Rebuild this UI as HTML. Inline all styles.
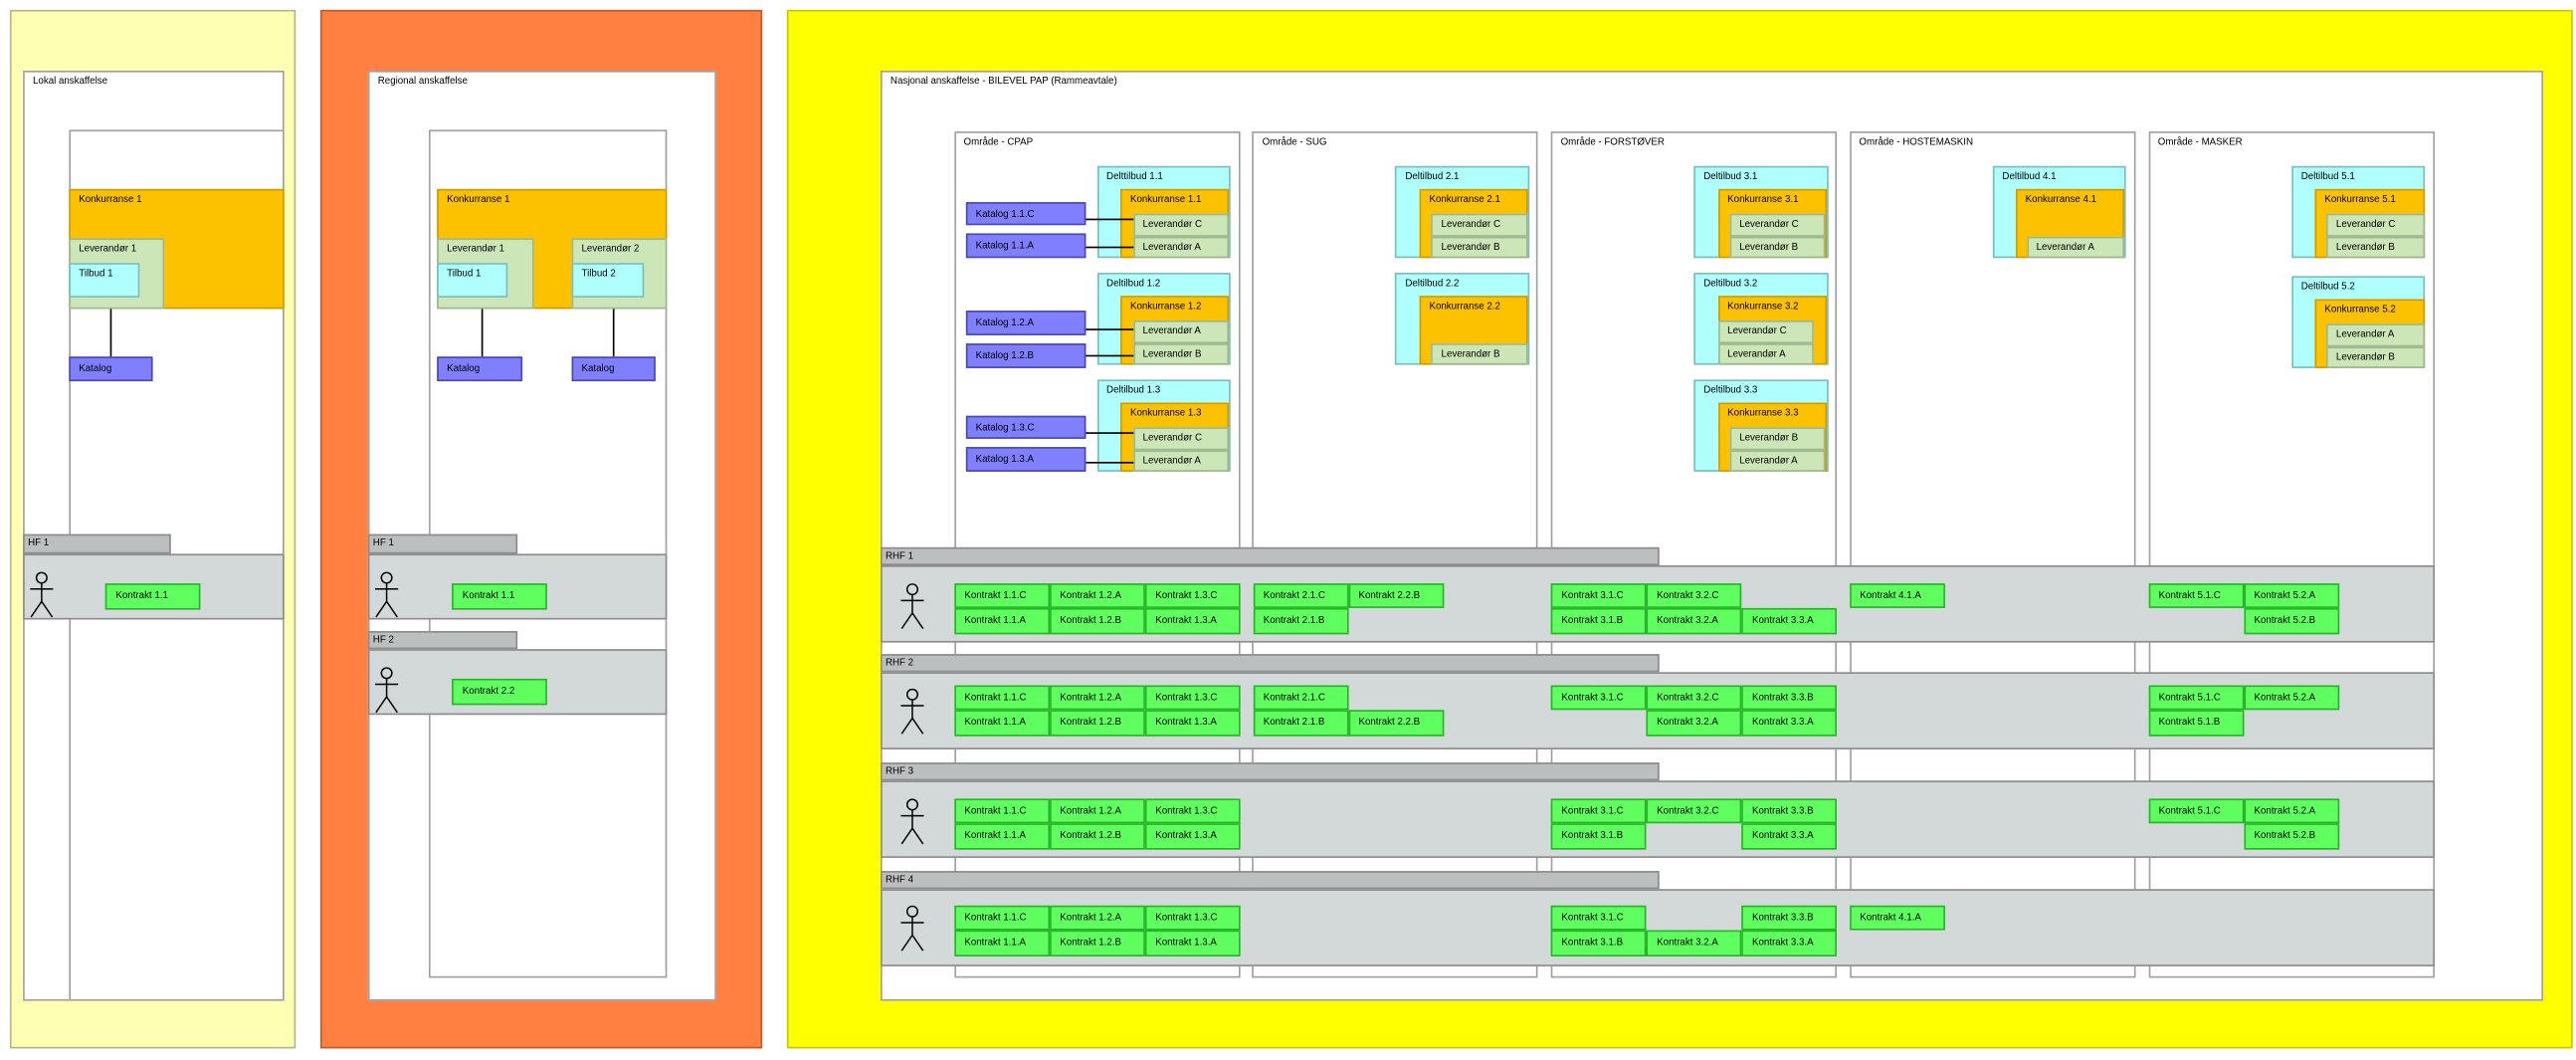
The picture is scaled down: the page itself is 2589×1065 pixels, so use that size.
<!DOCTYPE html>
<html><head><meta charset="utf-8"><style>
html,body{margin:0;padding:0;background:#fff;width:2589px;height:1065px;overflow:hidden}
#s{position:absolute;left:0;top:0;width:1568px;height:645px;transform:scale(1.65115);transform-origin:0 0;font-family:"Liberation Sans",sans-serif;color:#000}
#s div{position:absolute;box-sizing:border-box;white-space:nowrap;font-size:5.9px}
.w{background:#fff;border:0.6px solid #a0a0a0}
.t{padding:3px 0 0 5px}
.o{background:#fcc200;border:0.6px solid #d29c00;padding:3px 0 0 5px}
.g{background:#cce6b8;border:0.6px solid #9cb890;padding:3px 0 0 5px}
.c{background:#b0ffff;border:0.6px solid #7cbcbc;padding:3px 0 0 5px}
.kt{background:#8080ff;border:0.6px solid #4848b8;padding:0 0 0 5px;line-height:14px}
.k{background:#60ff60;border:0.6px solid #28b428;width:58.1px;height:15.6px;line-height:15px;padding-left:5.5px}
.tab{background:#bcbfc0;border:0.6px solid #8c8c8c;padding:1.5px 0 0 2px}
.row{background:#d3d8d8;border:0.6px solid #8c8c8c}
.ln{background:#000}
svg{position:absolute}
</style></head><body><div id="s">

<!-- Lokal -->
<div style="left:6px;top:6px;width:174px;height:632px;background:#ffffb4;border:0.6px solid #b4b48c"></div>
<div class="w t" style="left:14px;top:43px;width:159px;height:566px">Lokal anskaffelse</div>
<div class="w" style="left:42px;top:79px;width:131px;height:530px"></div>
<div class="o" style="left:42px;top:115px;width:131px;height:73px">Konkurranse 1</div>
<div class="g" style="left:42px;top:145px;width:58px;height:43px">Leverandør 1</div>
<div class="c" style="left:42px;top:160px;width:43px;height:21px">Tilbud 1</div>
<div class="ln" style="left:67px;top:188px;width:0.6px;height:29px"></div>
<div class="kt" style="left:42px;top:217px;width:51px;height:15px">Katalog</div>
<div class="tab" style="left:14px;top:325px;width:90px;height:12px">HF 1</div>
<div class="row" style="left:14px;top:337px;width:159px;height:40px"></div>
<svg style="left:17px;top:348px" width="16.7" height="28" viewBox="0 0 16 28"><g fill="none" stroke="#000" stroke-width="0.9"><circle cx="8" cy="3.6" r="3.2"/><path d="M8 6.8V18M1 10.4H15M8 18L1.5 27.5M8 18L14.5 27.5"/></g></svg>
<div class="k" style="left:64px;top:355px">Kontrakt 1.1</div>

<!-- Regional -->
<div style="left:195px;top:6px;width:269px;height:632px;background:#ff8040;border:0.6px solid #c05a28"></div>
<div class="w t" style="left:224px;top:43px;width:212px;height:566px">Regional anskaffelse</div>
<div class="w" style="left:261px;top:79px;width:145px;height:516px"></div>
<div class="o" style="left:266px;top:115px;width:140px;height:73px">Konkurranse 1</div>
<div class="g" style="left:266px;top:145px;width:59px;height:43px">Leverandør 1</div>
<div class="c" style="left:266px;top:160px;width:43px;height:21px">Tilbud 1</div>
<div class="g" style="left:348px;top:145px;width:58px;height:43px">Leverandør 2</div>
<div class="c" style="left:348px;top:160px;width:44px;height:21px">Tilbud 2</div>
<div class="ln" style="left:293px;top:188px;width:0.6px;height:29px"></div>
<div class="ln" style="left:373px;top:188px;width:0.6px;height:29px"></div>
<div class="kt" style="left:266px;top:217px;width:52px;height:15px">Katalog</div>
<div class="kt" style="left:348px;top:217px;width:51px;height:15px">Katalog</div>
<div class="tab" style="left:224px;top:325px;width:91px;height:12px">HF 1</div>
<div class="row" style="left:224px;top:337px;width:182px;height:40px"></div>
<svg style="left:227px;top:348px" width="16.7" height="28" viewBox="0 0 16 28"><g fill="none" stroke="#000" stroke-width="0.9"><circle cx="8" cy="3.6" r="3.2"/><path d="M8 6.8V18M1 10.4H15M8 18L1.5 27.5M8 18L14.5 27.5"/></g></svg>
<div class="k" style="left:275px;top:355px">Kontrakt 1.1</div>
<div class="tab" style="left:224px;top:384px;width:91px;height:11px">HF 2</div>
<div class="row" style="left:224px;top:395px;width:182px;height:40px"></div>
<svg style="left:227px;top:406px" width="16.7" height="28" viewBox="0 0 16 28"><g fill="none" stroke="#000" stroke-width="0.9"><circle cx="8" cy="3.6" r="3.2"/><path d="M8 6.8V18M1 10.4H15M8 18L1.5 27.5M8 18L14.5 27.5"/></g></svg>
<div class="k" style="left:275px;top:413px">Kontrakt 2.2</div>

<!-- Nasjonal -->
<div style="left:479px;top:6px;width:1087px;height:632px;background:#ffff00;border:0.6px solid #c8c800"></div>
<div class="w t" style="left:536px;top:43px;width:1012px;height:566px">Nasjonal anskaffelse - BILEVEL PAP (Rammeavtale)</div>

<div class="w t" style="left:580.6px;top:80px;width:174px;height:515px">Område - CPAP</div>
<div class="w t" style="left:762.3px;top:80px;width:174px;height:515px">Område - SUG</div>
<div class="w t" style="left:944px;top:80px;width:174px;height:515px">Område - FORSTØVER</div>
<div class="w t" style="left:1125.6px;top:80px;width:174px;height:515px">Område - HOSTEMASKIN</div>
<div class="w t" style="left:1307.5px;top:80px;width:174.5px;height:515px">Område - MASKER</div>

<!-- CPAP -->
<div class="c" style="left:667.5px;top:101px;width:81.5px;height:56px">Delttilbud 1.1</div>
<div class="o" style="left:682px;top:115.4px;width:66px;height:41.6px">Konkurranse 1.1</div>
<div class="g" style="left:689.6px;top:129.8px;width:58.4px;height:14.4px">Leverandør C</div>
<div class="g" style="left:689.6px;top:144.2px;width:58.4px;height:12.8px">Leverandør A</div>
<div class="kt" style="left:587.9px;top:122.6px;width:72.7px;height:14.6px">Katalog 1.1.C</div>
<div class="kt" style="left:587.9px;top:142.4px;width:72.7px;height:14.6px">Katalog 1.1.A</div>
<div class="ln" style="left:660.6px;top:132.6px;width:29px;height:0.6px"></div>
<div class="ln" style="left:660.6px;top:150.3px;width:29px;height:0.6px"></div>

<div class="c" style="left:667.5px;top:166px;width:81.5px;height:56px">Deltilbud 1.2</div>
<div class="o" style="left:682px;top:180.4px;width:66px;height:41.6px">Konkurranse 1.2</div>
<div class="g" style="left:689.6px;top:194.8px;width:58.4px;height:14.4px">Leverandør A</div>
<div class="g" style="left:689.6px;top:209.2px;width:58.4px;height:12.8px">Leverandør B</div>
<div class="kt" style="left:587.9px;top:189.4px;width:72.7px;height:14.6px">Katalog 1.2.A</div>
<div class="kt" style="left:587.9px;top:209px;width:72.7px;height:14.6px">Katalog 1.2.B</div>
<div class="ln" style="left:660.6px;top:199.6px;width:29px;height:0.6px"></div>
<div class="ln" style="left:660.6px;top:216px;width:29px;height:0.6px"></div>

<div class="c" style="left:667.5px;top:231px;width:81.5px;height:56px">Deltilbud 1.3</div>
<div class="o" style="left:682px;top:245.4px;width:66px;height:41.6px">Konkurranse 1.3</div>
<div class="g" style="left:689.6px;top:259.8px;width:58.4px;height:14.4px">Leverandør C</div>
<div class="g" style="left:689.6px;top:274.2px;width:58.4px;height:12.8px">Leverandør A</div>
<div class="kt" style="left:587.9px;top:252.6px;width:72.7px;height:14.6px">Katalog 1.3.C</div>
<div class="kt" style="left:587.9px;top:272.4px;width:72.7px;height:14.6px">Katalog 1.3.A</div>
<div class="ln" style="left:660.6px;top:263.2px;width:29px;height:0.6px"></div>
<div class="ln" style="left:660.6px;top:280.8px;width:29px;height:0.6px"></div>

<!-- SUG -->
<div class="c" style="left:849.4px;top:101px;width:81.5px;height:56px">Deltilbud 2.1</div>
<div class="o" style="left:864px;top:115.4px;width:66px;height:41.6px">Konkurranse 2.1</div>
<div class="g" style="left:871.3px;top:129.8px;width:58.4px;height:14.4px">Leverandør C</div>
<div class="g" style="left:871.3px;top:144.2px;width:58.4px;height:12.8px">Leverandør B</div>
<div class="c" style="left:849.4px;top:166px;width:81.5px;height:56px">Deltilbud 2.2</div>
<div class="o" style="left:864px;top:180.4px;width:66px;height:41.6px">Konkurranse 2.2</div>
<div class="g" style="left:871.3px;top:209.2px;width:58.4px;height:12.8px">Leverandør B</div>

<!-- FORSTØVER -->
<div class="c" style="left:1031px;top:101px;width:81.5px;height:56px">Deltilbud 3.1</div>
<div class="o" style="left:1045.5px;top:115.4px;width:66px;height:41.6px">Konkurranse 3.1</div>
<div class="g" style="left:1052.8px;top:129.8px;width:58.4px;height:14.4px">Leverandør C</div>
<div class="g" style="left:1052.8px;top:144.2px;width:58.4px;height:12.8px">Leverandør B</div>
<div class="c" style="left:1031px;top:166px;width:81.5px;height:56px">Deltilbud 3.2</div>
<div class="o" style="left:1045.5px;top:180.4px;width:66px;height:41.6px">Konkurranse 3.2</div>
<div class="g" style="left:1045.5px;top:194.8px;width:58.5px;height:14.4px">Leverandør C</div>
<div class="g" style="left:1045.5px;top:209.2px;width:58.5px;height:12.8px">Leverandør A</div>
<div class="c" style="left:1031px;top:231px;width:81.5px;height:56px">Deltilbud 3.3</div>
<div class="o" style="left:1045.5px;top:245.4px;width:66px;height:41.6px">Konkurranse 3.3</div>
<div class="g" style="left:1052.8px;top:259.8px;width:58.4px;height:14.4px">Leverandør B</div>
<div class="g" style="left:1052.8px;top:274.2px;width:58.4px;height:12.8px">Leverandør A</div>

<!-- HOSTEMASKIN -->
<div class="c" style="left:1212.8px;top:101px;width:81.5px;height:56px">Deltilbud 4.1</div>
<div class="o" style="left:1226.9px;top:115.4px;width:66px;height:41.6px">Konkurranse 4.1</div>
<div class="g" style="left:1233.5px;top:144.2px;width:59px;height:12.8px">Leverandør A</div>

<!-- MASKER -->
<div class="c" style="left:1394.7px;top:101px;width:81.5px;height:56px">Deltilbud 5.1</div>
<div class="o" style="left:1409px;top:115.4px;width:66.5px;height:41.6px">Konkurranse 5.1</div>
<div class="g" style="left:1416px;top:129.8px;width:59.5px;height:14.4px">Leverandør C</div>
<div class="g" style="left:1416px;top:144.2px;width:59.5px;height:12.8px">Leverandør B</div>
<div class="c" style="left:1394.7px;top:168px;width:81.5px;height:56px">Deltilbud 5.2</div>
<div class="o" style="left:1409px;top:182.4px;width:66.5px;height:41.6px">Konkurranse 5.2</div>
<div class="g" style="left:1416px;top:196.8px;width:59.5px;height:14.4px">Leverandør A</div>
<div class="g" style="left:1416px;top:211.2px;width:59.5px;height:12.8px">Leverandør B</div>

<!-- RHF 1 -->
<div class="tab" style="left:536px;top:333px;width:473.5px;height:11px">RHF 1</div>
<div class="row" style="left:536px;top:344px;width:946px;height:47px"></div>
<svg style="left:547px;top:355px" width="16.7" height="28" viewBox="0 0 16 28"><g fill="none" stroke="#000" stroke-width="0.9"><circle cx="8" cy="3.6" r="3.2"/><path d="M8 6.8V18M1 10.4H15M8 18L1.5 27.5M8 18L14.5 27.5"/></g></svg>
<div class="k" style="left:580.6px;top:354.8px">Kontrakt 1.1.C</div>
<div class="k" style="left:638.7px;top:354.8px">Kontrakt 1.2.A</div>
<div class="k" style="left:696.8px;top:354.8px">Kontrakt 1.3.C</div>
<div class="k" style="left:762.5px;top:354.8px">Kontrakt 2.1.C</div>
<div class="k" style="left:820.5px;top:354.8px">Kontrakt 2.2.B</div>
<div class="k" style="left:944px;top:354.8px">Kontrakt 3.1.C</div>
<div class="k" style="left:1002px;top:354.8px">Kontrakt 3.2.C</div>
<div class="k" style="left:1125.6px;top:354.8px">Kontrakt 4.1.A</div>
<div class="k" style="left:1307.5px;top:354.8px">Kontrakt 5.1.C</div>
<div class="k" style="left:1365.6px;top:354.8px">Kontrakt 5.2.A</div>
<div class="k" style="left:580.6px;top:370.4px">Kontrakt 1.1.A</div>
<div class="k" style="left:638.7px;top:370.4px">Kontrakt 1.2.B</div>
<div class="k" style="left:696.8px;top:370.4px">Kontrakt 1.3.A</div>
<div class="k" style="left:762.5px;top:370.4px">Kontrakt 2.1.B</div>
<div class="k" style="left:944px;top:370.4px">Kontrakt 3.1.B</div>
<div class="k" style="left:1002px;top:370.4px">Kontrakt 3.2.A</div>
<div class="k" style="left:1060px;top:370.4px">Kontrakt 3.3.A</div>
<div class="k" style="left:1365.6px;top:370.4px">Kontrakt 5.2.B</div>

<!-- RHF 2 -->
<div class="tab" style="left:536px;top:398px;width:473.5px;height:11px">RHF 2</div>
<div class="row" style="left:536px;top:409px;width:946px;height:47px"></div>
<svg style="left:547px;top:419px" width="16.7" height="28" viewBox="0 0 16 28"><g fill="none" stroke="#000" stroke-width="0.9"><circle cx="8" cy="3.6" r="3.2"/><path d="M8 6.8V18M1 10.4H15M8 18L1.5 27.5M8 18L14.5 27.5"/></g></svg>
<div class="k" style="left:580.6px;top:416.6px">Kontrakt 1.1.C</div>
<div class="k" style="left:638.7px;top:416.6px">Kontrakt 1.2.A</div>
<div class="k" style="left:696.8px;top:416.6px">Kontrakt 1.3.C</div>
<div class="k" style="left:762.5px;top:416.6px">Kontrakt 2.1.C</div>
<div class="k" style="left:944px;top:416.6px">Kontrakt 3.1.C</div>
<div class="k" style="left:1002px;top:416.6px">Kontrakt 3.2.C</div>
<div class="k" style="left:1060px;top:416.6px">Kontrakt 3.3.B</div>
<div class="k" style="left:1307.5px;top:416.6px">Kontrakt 5.1.C</div>
<div class="k" style="left:1365.6px;top:416.6px">Kontrakt 5.2.A</div>
<div class="k" style="left:580.6px;top:432.2px">Kontrakt 1.1.A</div>
<div class="k" style="left:638.7px;top:432.2px">Kontrakt 1.2.B</div>
<div class="k" style="left:696.8px;top:432.2px">Kontrakt 1.3.A</div>
<div class="k" style="left:762.5px;top:432.2px">Kontrakt 2.1.B</div>
<div class="k" style="left:820.5px;top:432.2px">Kontrakt 2.2.B</div>
<div class="k" style="left:1002px;top:432.2px">Kontrakt 3.2.A</div>
<div class="k" style="left:1060px;top:432.2px">Kontrakt 3.3.A</div>
<div class="k" style="left:1307.5px;top:432.2px">Kontrakt 5.1.B</div>

<!-- RHF 3 -->
<div class="tab" style="left:536px;top:464px;width:473.5px;height:11px">RHF 3</div>
<div class="row" style="left:536px;top:475px;width:946px;height:47px"></div>
<svg style="left:547px;top:486px" width="16.7" height="28" viewBox="0 0 16 28"><g fill="none" stroke="#000" stroke-width="0.9"><circle cx="8" cy="3.6" r="3.2"/><path d="M8 6.8V18M1 10.4H15M8 18L1.5 27.5M8 18L14.5 27.5"/></g></svg>
<div class="k" style="left:580.6px;top:485.8px">Kontrakt 1.1.C</div>
<div class="k" style="left:638.7px;top:485.8px">Kontrakt 1.2.A</div>
<div class="k" style="left:696.8px;top:485.8px">Kontrakt 1.3.C</div>
<div class="k" style="left:944px;top:485.8px">Kontrakt 3.1.C</div>
<div class="k" style="left:1002px;top:485.8px">Kontrakt 3.2.C</div>
<div class="k" style="left:1060px;top:485.8px">Kontrakt 3.3.B</div>
<div class="k" style="left:1307.5px;top:485.8px">Kontrakt 5.1.C</div>
<div class="k" style="left:1365.6px;top:485.8px">Kontrakt 5.2.A</div>
<div class="k" style="left:580.6px;top:501.4px">Kontrakt 1.1.A</div>
<div class="k" style="left:638.7px;top:501.4px">Kontrakt 1.2.B</div>
<div class="k" style="left:696.8px;top:501.4px">Kontrakt 1.3.A</div>
<div class="k" style="left:944px;top:501.4px">Kontrakt 3.1.B</div>
<div class="k" style="left:1060px;top:501.4px">Kontrakt 3.3.A</div>
<div class="k" style="left:1365.6px;top:501.4px">Kontrakt 5.2.B</div>

<!-- RHF 4 -->
<div class="tab" style="left:536px;top:530px;width:473.5px;height:11px">RHF 4</div>
<div class="row" style="left:536px;top:541px;width:946px;height:47px"></div>
<svg style="left:547px;top:551px" width="16.7" height="28" viewBox="0 0 16 28"><g fill="none" stroke="#000" stroke-width="0.9"><circle cx="8" cy="3.6" r="3.2"/><path d="M8 6.8V18M1 10.4H15M8 18L1.5 27.5M8 18L14.5 27.5"/></g></svg>
<div class="k" style="left:580.6px;top:550.6px">Kontrakt 1.1.C</div>
<div class="k" style="left:638.7px;top:550.6px">Kontrakt 1.2.A</div>
<div class="k" style="left:696.8px;top:550.6px">Kontrakt 1.3.C</div>
<div class="k" style="left:944px;top:550.6px">Kontrakt 3.1.C</div>
<div class="k" style="left:1060px;top:550.6px">Kontrakt 3.3.B</div>
<div class="k" style="left:1125.6px;top:550.6px">Kontrakt 4.1.A</div>
<div class="k" style="left:580.6px;top:566.2px">Kontrakt 1.1.A</div>
<div class="k" style="left:638.7px;top:566.2px">Kontrakt 1.2.B</div>
<div class="k" style="left:696.8px;top:566.2px">Kontrakt 1.3.A</div>
<div class="k" style="left:944px;top:566.2px">Kontrakt 3.1.B</div>
<div class="k" style="left:1002px;top:566.2px">Kontrakt 3.2.A</div>
<div class="k" style="left:1060px;top:566.2px">Kontrakt 3.3.A</div>

</div></body></html>
